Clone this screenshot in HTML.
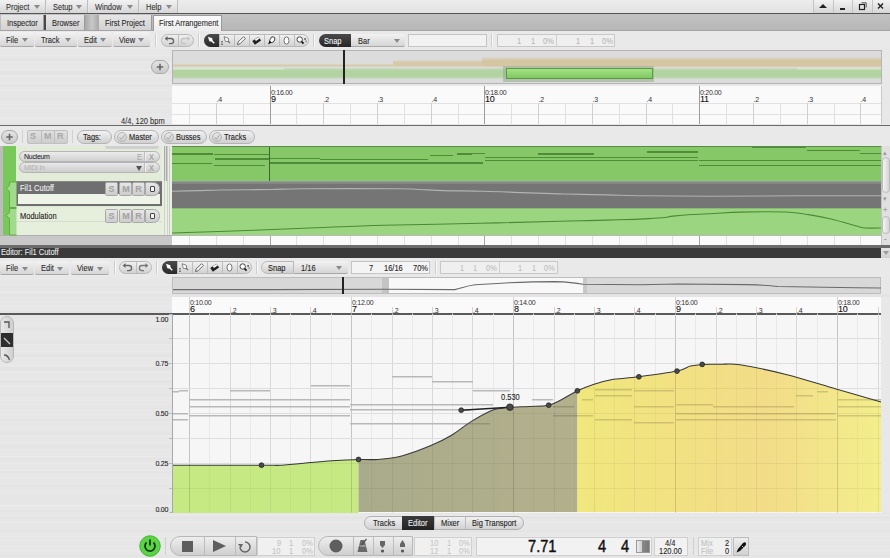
<!DOCTYPE html>
<html><head><meta charset="utf-8"><style>
html,body{margin:0;padding:0;}
body{width:890px;height:558px;overflow:hidden;position:relative;background:#e8e8e8;font-family:"Liberation Sans",sans-serif;}
body>div{position:absolute;}
.t{position:absolute;white-space:nowrap;line-height:1;letter-spacing:-0.04em;-webkit-text-stroke:0.1px currentColor;}
</style></head><body>
<div style="left:0px;top:0px;width:890px;height:13px;background:linear-gradient(#ececec,#e2e2e2);"></div>
<div style="left:0px;top:0px;width:46px;height:13px;background:linear-gradient(#f2f2f2,#d6d6d6);border-right:1px solid #bdbdbd;box-sizing:border-box;"></div>
<div class="t" style="left:6px;top:3px;font-size:9px;color:#333;transform:scaleX(0.83);transform-origin:0 0;letter-spacing:0;">Project</div>
<div style="left:34px;top:5px;width:0;height:0;border-left:3px solid transparent;border-right:3px solid transparent;border-top:4px solid #8a8a8a;"></div>
<div style="left:47px;top:0px;width:41px;height:13px;background:linear-gradient(#f2f2f2,#d6d6d6);border-right:1px solid #bdbdbd;box-sizing:border-box;"></div>
<div class="t" style="left:53px;top:3px;font-size:9px;color:#333;transform:scaleX(0.83);transform-origin:0 0;letter-spacing:0;">Setup</div>
<div style="left:76px;top:5px;width:0;height:0;border-left:3px solid transparent;border-right:3px solid transparent;border-top:4px solid #8a8a8a;"></div>
<div style="left:89px;top:0px;width:50px;height:13px;background:linear-gradient(#f2f2f2,#d6d6d6);border-right:1px solid #bdbdbd;box-sizing:border-box;"></div>
<div class="t" style="left:95px;top:3px;font-size:9px;color:#333;transform:scaleX(0.83);transform-origin:0 0;letter-spacing:0;">Window</div>
<div style="left:127px;top:5px;width:0;height:0;border-left:3px solid transparent;border-right:3px solid transparent;border-top:4px solid #8a8a8a;"></div>
<div style="left:140px;top:0px;width:38px;height:13px;background:linear-gradient(#f2f2f2,#d6d6d6);border-right:1px solid #bdbdbd;box-sizing:border-box;"></div>
<div class="t" style="left:146px;top:3px;font-size:9px;color:#333;transform:scaleX(0.83);transform-origin:0 0;letter-spacing:0;">Help</div>
<div style="left:166px;top:5px;width:0;height:0;border-left:3px solid transparent;border-right:3px solid transparent;border-top:4px solid #8a8a8a;"></div>
<div style="left:813px;top:0px;width:20px;height:13px;background:linear-gradient(#f2f2f2,#d6d6d6);border-left:1px solid #c4c4c4;box-sizing:border-box;"></div>
<div style="left:833px;top:0px;width:19px;height:13px;background:linear-gradient(#f2f2f2,#d6d6d6);border-left:1px solid #c4c4c4;box-sizing:border-box;"></div>
<div style="left:852px;top:0px;width:20px;height:13px;background:linear-gradient(#f2f2f2,#d6d6d6);border-left:1px solid #c4c4c4;box-sizing:border-box;"></div>
<div style="left:872px;top:0px;width:18px;height:13px;background:linear-gradient(#f2f2f2,#d6d6d6);border-left:1px solid #c4c4c4;box-sizing:border-box;"></div>
<div style="left:819px;top:4px;width:0px;height:0px;border-left:4px solid transparent;border-right:4px solid transparent;border-bottom:4px solid #222;"></div>
<div style="left:840px;top:8px;width:5px;height:2px;background:#222;"></div>
<svg style="position:absolute;left:852px;top:0" width="20" height="13"><rect x="7.5" y="4.5" width="5" height="5" fill="none" stroke="#222" stroke-width="1.2"/><path d="M9.5 2.8 H14.2 V7.5" fill="none" stroke="#444" stroke-width="0.9"/></svg>
<svg style="position:absolute;left:872px;top:0" width="18" height="13"><path d="M6 3.5 L11 8.5 M11 3.5 L6 8.5" stroke="#222" stroke-width="1.4"/></svg>
<div style="left:0px;top:13px;width:890px;height:1px;background:#555;"></div>
<div style="left:0px;top:14px;width:890px;height:17px;background:linear-gradient(#c2c2c2,#b6b6b6);"></div>
<div style="left:0px;top:30px;width:890px;height:1px;background:#a4a4a4;"></div>
<div style="left:1px;top:15px;width:43px;height:15px;background:linear-gradient(#e6e6e6,#d2d2d2);border-right:1px solid #9a9a9a;box-sizing:border-box;"></div>
<div class="t" style="left:7px;top:19px;font-size:9px;color:#2a2a2a;transform:scaleX(0.83);transform-origin:0 0;letter-spacing:0;">Inspector</div>
<div style="left:46px;top:15px;width:39px;height:15px;background:linear-gradient(#e6e6e6,#d2d2d2);border-right:1px solid #9a9a9a;box-sizing:border-box;"></div>
<div class="t" style="left:52px;top:19px;font-size:9px;color:#2a2a2a;transform:scaleX(0.83);transform-origin:0 0;letter-spacing:0;">Browser</div>
<div style="left:99px;top:15px;width:53px;height:15px;background:linear-gradient(#e6e6e6,#d2d2d2);border-right:1px solid #9a9a9a;box-sizing:border-box;"></div>
<div class="t" style="left:105px;top:19px;font-size:9px;color:#2a2a2a;transform:scaleX(0.83);transform-origin:0 0;letter-spacing:0;">First Project</div>
<div style="left:153px;top:15px;width:69px;height:16px;background:linear-gradient(#fafafa,#ededed);border:1px solid #9a9a9a;border-bottom:none;box-sizing:border-box;"></div>
<div class="t" style="left:159px;top:19px;font-size:9px;color:#2a2a2a;transform:scaleX(0.83);transform-origin:0 0;letter-spacing:0;">First Arrangement</div>
<div style="left:44px;top:15px;width:2px;height:15px;background:#4a4a4a;"></div>
<div style="left:85px;top:15px;width:14px;height:15px;background:linear-gradient(90deg,#a8a8a8,#c8c8c8,#a8a8a8);"></div>
<div style="left:0px;top:31px;width:890px;height:17px;background:#e9e9e9;"></div>
<div style="left:0px;top:32px;width:34px;height:15px;background:linear-gradient(#f2f2f2,#d6d6d6);border-radius:2px;border-bottom:1px solid #a8a8a8;box-sizing:border-box;"></div>
<div class="t" style="left:6px;top:36px;font-size:9px;color:#2a2a2a;transform:scaleX(0.83);transform-origin:0 0;letter-spacing:0;">File</div>
<div style="left:22px;top:38px;width:0;height:0;border-left:3px solid transparent;border-right:3px solid transparent;border-top:4px solid #8a8a8a;"></div>
<div style="left:35px;top:32px;width:42px;height:15px;background:linear-gradient(#f2f2f2,#d6d6d6);border-radius:2px;border-bottom:1px solid #a8a8a8;box-sizing:border-box;"></div>
<div class="t" style="left:41px;top:36px;font-size:9px;color:#2a2a2a;transform:scaleX(0.83);transform-origin:0 0;letter-spacing:0;">Track</div>
<div style="left:65px;top:38px;width:0;height:0;border-left:3px solid transparent;border-right:3px solid transparent;border-top:4px solid #8a8a8a;"></div>
<div style="left:78px;top:32px;width:34px;height:15px;background:linear-gradient(#f2f2f2,#d6d6d6);border-radius:2px;border-bottom:1px solid #a8a8a8;box-sizing:border-box;"></div>
<div class="t" style="left:84px;top:36px;font-size:9px;color:#2a2a2a;transform:scaleX(0.83);transform-origin:0 0;letter-spacing:0;">Edit</div>
<div style="left:100px;top:38px;width:0;height:0;border-left:3px solid transparent;border-right:3px solid transparent;border-top:4px solid #8a8a8a;"></div>
<div style="left:113px;top:32px;width:37px;height:15px;background:linear-gradient(#f2f2f2,#d6d6d6);border-radius:2px;border-bottom:1px solid #a8a8a8;box-sizing:border-box;"></div>
<div class="t" style="left:119px;top:36px;font-size:9px;color:#2a2a2a;transform:scaleX(0.83);transform-origin:0 0;letter-spacing:0;">View</div>
<div style="left:138px;top:38px;width:0;height:0;border-left:3px solid transparent;border-right:3px solid transparent;border-top:4px solid #8a8a8a;"></div>
<div style="left:161px;top:34px;width:33px;height:13px;background:linear-gradient(#f0f0f0,#d2d2d2);border-radius:7px;border:1px solid #b8b8b8;box-sizing:border-box;"></div>
<div style="left:178px;top:35px;width:1px;height:11px;background:#bdbdbd;"></div>
<svg style="position:absolute;left:161px;top:34px" width="33" height="13"><path d="M6 4.5 L10 4.5 A2.6 2.6 0 0 1 10 9.7 L8 9.7" stroke="#666" stroke-width="1.3" fill="none"/><path d="M3.5 4.5 L6.5 2 L6.5 7 Z" fill="#666"/><path d="M27 4.5 L23 4.5 A2.6 2.6 0 0 0 23 9.7 L25 9.7" stroke="#c4c4c4" stroke-width="1.3" fill="none"/><path d="M29.5 4.5 L26.5 2 L26.5 7 Z" fill="#c4c4c4"/></svg>
<div style="left:204px;top:34px;width:105px;height:13px;background:linear-gradient(#f0f0f0,#d2d2d2);border-radius:7px;border:1px solid #b8b8b8;box-sizing:border-box;"></div>
<div style="left:219px;top:35px;width:1px;height:11px;background:#bdbdbd;"></div>
<div style="left:234px;top:35px;width:1px;height:11px;background:#bdbdbd;"></div>
<div style="left:249px;top:35px;width:1px;height:11px;background:#bdbdbd;"></div>
<div style="left:264px;top:35px;width:1px;height:11px;background:#bdbdbd;"></div>
<div style="left:279px;top:35px;width:1px;height:11px;background:#bdbdbd;"></div>
<div style="left:294px;top:35px;width:1px;height:11px;background:#bdbdbd;"></div>
<div style="left:204px;top:34px;width:15px;height:13px;background:linear-gradient(#4a4a4a,#2a2a2a);border-radius:7px 0 0 7px;"></div>
<svg style="position:absolute;left:204px;top:34px" width="107" height="14"><path d="M4.0 2.7 L8.3 4.3 L8.7 7.7 L5.3 7.3 Z" fill="#fff"/><path d="M7.7 6.7 L10.3 9.3" stroke="#fff" stroke-width="1.3"/><path d="M20.0 2.7 L24.3 4.3 L24.7 7.7 L21.3 7.3 Z" fill="#fff" stroke="#666" stroke-width="0.8"/><path d="M24.0 7.2 L26.0 9.2" stroke="#666" stroke-width="1.1"/><path d="M18.0 7.0 v1.5 M18.0 9.5 v1.5" stroke="#333" stroke-width="1.1"/><path d="M33.5 10.5 L34.2 8.0 L39.5 2.7 L41.3 4.5 L36.0 9.8 Z" fill="#fff" stroke="#555" stroke-width="0.9"/><g transform="rotate(-35 52.5 6.5)"><rect x="48.7" y="4.5" width="7.6" height="4.6" fill="#222"/><rect x="51.7" y="4.7" width="4.4" height="2" fill="#fff"/></g><ellipse cx="68.3" cy="5.7" rx="2.2" ry="3.1" transform="rotate(30 68.3 5.7)" fill="#fff" stroke="#444" stroke-width="0.9"/><path d="M64.2 10.5 L65.3 6.7 L67.7 8.5 Z" fill="#111"/><ellipse cx="82.5" cy="6.5" rx="2.5" ry="3.6" fill="#fff" stroke="#666" stroke-width="0.9"/><circle cx="95.7" cy="5.5" r="2.7" fill="#fff" stroke="#444" stroke-width="1"/><path d="M97.5 7.5 L99.5 9.7" stroke="#111" stroke-width="1.8"/><circle cx="101.1" cy="4.9" r="0.9" fill="#444"/><circle cx="102.1" cy="7.1" r="0.7" fill="#444"/></svg>
<div style="left:319px;top:34px;width:32px;height:13px;background:linear-gradient(#4a4a4a,#262626);border-radius:7px 0 0 7px;"></div>
<div class="t" style="left:324px;top:37px;font-size:9px;color:#f4f4f4;transform:scaleX(0.83);transform-origin:0 0;letter-spacing:0;">Snap</div>
<div style="left:351px;top:34px;width:54px;height:13px;background:linear-gradient(#f2f2f2,#d6d6d6);border-radius:0 2px 2px 0;border-bottom:1px solid #a8a8a8;box-sizing:border-box;"></div>
<div class="t" style="left:358px;top:37px;font-size:9px;color:#2a2a2a;transform:scaleX(0.83);transform-origin:0 0;letter-spacing:0;">Bar</div>
<div style="left:394px;top:39px;width:0;height:0;border-left:3px solid transparent;border-right:3px solid transparent;border-top:4px solid #8a8a8a;"></div>
<div style="left:408px;top:34px;width:79px;height:13px;background:#f2f2f2;border:1px solid #c4c4c4;box-sizing:border-box;"></div>
<div style="left:497px;top:34px;width:118px;height:13px;background:#efefef;border:1px solid #c8c8c8;box-sizing:border-box;"></div>
<div style="left:556px;top:35px;width:1px;height:11px;background:#cfcfcf;"></div>
<div class="t" style="left:516.5px;top:37px;font-size:9px;color:#b8b8b8;transform:scaleX(0.83);transform-origin:0 0;letter-spacing:0;">1</div>
<div class="t" style="left:530.5px;top:37px;font-size:9px;color:#b8b8b8;transform:scaleX(0.83);transform-origin:0 0;letter-spacing:0;">1</div>
<div class="t" style="left:543px;top:37px;font-size:9px;color:#b8b8b8;transform:scaleX(0.83);transform-origin:0 0;letter-spacing:0;">0%</div>
<div class="t" style="left:576px;top:37px;font-size:9px;color:#b8b8b8;transform:scaleX(0.83);transform-origin:0 0;letter-spacing:0;">1</div>
<div class="t" style="left:590px;top:37px;font-size:9px;color:#b8b8b8;transform:scaleX(0.83);transform-origin:0 0;letter-spacing:0;">1</div>
<div class="t" style="left:602px;top:37px;font-size:9px;color:#b8b8b8;transform:scaleX(0.83);transform-origin:0 0;letter-spacing:0;">0%</div>
<div style="left:155px;top:34px;width:1px;height:13px;background:#cdcdcd;border-right:1px solid #f8f8f8;"></div>
<div style="left:198px;top:34px;width:1px;height:13px;background:#cdcdcd;border-right:1px solid #f8f8f8;"></div>
<div style="left:313px;top:34px;width:1px;height:13px;background:#cdcdcd;border-right:1px solid #f8f8f8;"></div>
<div style="left:491px;top:34px;width:1px;height:13px;background:#cdcdcd;border-right:1px solid #f8f8f8;"></div>
<div style="left:0px;top:48px;width:172px;height:78px;background:repeating-linear-gradient(0deg,rgba(255,255,255,0.12) 0 1px,transparent 1px 7px),repeating-linear-gradient(0deg,rgba(0,0,0,0.01) 0 3px,transparent 3px 13px),#e7e7e7;"></div>
<div style="left:151px;top:60px;width:18px;height:14px;background:linear-gradient(#e4e4e4,#c9c9c9);border-radius:7px;border:1px solid #a8a8a8;box-sizing:border-box;"></div>
<svg style="position:absolute;left:151px;top:60px" width="18" height="14"><path d="M9 3.8 V10.2 M5.8 7 H12.2" stroke="#666" stroke-width="1.6"/></svg>
<div style="left:172px;top:50px;width:710px;height:34px;background:#dcdcdc;border:1px solid #b4b4b4;box-sizing:border-box;"></div>
<div style="left:173px;top:63.5px;width:708px;height:3px;background:linear-gradient(rgba(214,200,160,0.2),rgba(214,200,160,0.9),rgba(214,200,160,0.2));"></div>
<div style="left:393px;top:60px;width:90px;height:6px;background:linear-gradient(rgba(214,198,160,0.1),rgba(214,198,160,0.85) 40%,rgba(214,198,160,0.85) 70%,rgba(214,198,160,0.2));"></div>
<div style="left:482px;top:57px;width:399px;height:9.5px;background:linear-gradient(rgba(212,196,156,0.15),rgba(212,196,156,0.9) 35%,rgba(212,196,156,0.9) 70%,rgba(212,196,156,0.3));"></div>
<div style="left:173px;top:67.5px;width:111px;height:2px;background:#f2f2ec;"></div>
<div style="left:797px;top:67.5px;width:84px;height:2px;background:#f0f0ea;"></div>
<div style="left:173px;top:68px;width:708px;height:11px;background:linear-gradient(rgba(170,210,150,0.25),rgba(170,210,150,0.85) 25%,rgba(170,210,150,0.85) 75%,rgba(170,210,150,0.25));"></div>
<div style="left:503px;top:66px;width:151px;height:16px;background:rgba(150,170,140,0.55);"></div>
<div style="left:506px;top:68px;width:147px;height:10.5px;background:linear-gradient(#a4e286,#80c862);border:1px solid #5a9a40;box-sizing:border-box;"></div>
<div style="left:343px;top:50px;width:2px;height:34px;background:#222;"></div>
<div style="left:172px;top:86px;width:709px;height:38px;background:#fafafa;"></div>
<div style="left:172px;top:103px;width:709px;height:1px;background:#e2e2e2;"></div>
<div style="left:172px;top:114px;width:709px;height:1px;background:#e2e2e2;"></div>
<div style="left:881px;top:86px;width:1px;height:38px;background:#c8c8c8;"></div>
<div style="left:189px;top:103px;width:1px;height:21px;background:#e0e0e0;"></div>
<div style="left:216px;top:103px;width:1px;height:21px;background:#d0d0d0;"></div>
<div style="left:243px;top:103px;width:1px;height:21px;background:#e0e0e0;"></div>
<div style="left:270px;top:86px;width:1px;height:38px;background:#9c9c9c;"></div>
<div style="left:296px;top:103px;width:1px;height:21px;background:#e0e0e0;"></div>
<div style="left:323px;top:103px;width:1px;height:21px;background:#d0d0d0;"></div>
<div style="left:350px;top:103px;width:1px;height:21px;background:#e0e0e0;"></div>
<div style="left:377px;top:103px;width:1px;height:21px;background:#d0d0d0;"></div>
<div style="left:404px;top:103px;width:1px;height:21px;background:#e0e0e0;"></div>
<div style="left:431px;top:103px;width:1px;height:21px;background:#d0d0d0;"></div>
<div style="left:458px;top:103px;width:1px;height:21px;background:#e0e0e0;"></div>
<div style="left:484px;top:86px;width:1px;height:38px;background:#9c9c9c;"></div>
<div style="left:511px;top:103px;width:1px;height:21px;background:#e0e0e0;"></div>
<div style="left:538px;top:103px;width:1px;height:21px;background:#d0d0d0;"></div>
<div style="left:565px;top:103px;width:1px;height:21px;background:#e0e0e0;"></div>
<div style="left:592px;top:103px;width:1px;height:21px;background:#d0d0d0;"></div>
<div style="left:619px;top:103px;width:1px;height:21px;background:#e0e0e0;"></div>
<div style="left:646px;top:103px;width:1px;height:21px;background:#d0d0d0;"></div>
<div style="left:672px;top:103px;width:1px;height:21px;background:#e0e0e0;"></div>
<div style="left:699px;top:86px;width:1px;height:38px;background:#9c9c9c;"></div>
<div style="left:726px;top:103px;width:1px;height:21px;background:#e0e0e0;"></div>
<div style="left:753px;top:103px;width:1px;height:21px;background:#d0d0d0;"></div>
<div style="left:780px;top:103px;width:1px;height:21px;background:#e0e0e0;"></div>
<div style="left:807px;top:103px;width:1px;height:21px;background:#d0d0d0;"></div>
<div style="left:834px;top:103px;width:1px;height:21px;background:#e0e0e0;"></div>
<div style="left:860px;top:103px;width:1px;height:21px;background:#d0d0d0;"></div>
<div class="t" style="left:271px;top:89px;font-size:7px;color:#333;-webkit-text-stroke:0;">0:16.00</div>
<div class="t" style="left:271px;top:95px;font-size:9px;color:#111;">9</div>
<div class="t" style="left:485px;top:89px;font-size:7px;color:#333;-webkit-text-stroke:0;">0:18.00</div>
<div class="t" style="left:485px;top:95px;font-size:9px;color:#111;">10</div>
<div class="t" style="left:700px;top:89px;font-size:7px;color:#333;-webkit-text-stroke:0;">0:20.00</div>
<div class="t" style="left:700px;top:95px;font-size:9px;color:#111;">11</div>
<div class="t" style="left:216.5px;top:96px;font-size:7px;color:#333;-webkit-text-stroke:0;">.4</div>
<div class="t" style="left:323.5px;top:96px;font-size:7px;color:#333;-webkit-text-stroke:0;">.2</div>
<div class="t" style="left:377.5px;top:96px;font-size:7px;color:#333;-webkit-text-stroke:0;">.3</div>
<div class="t" style="left:431.5px;top:96px;font-size:7px;color:#333;-webkit-text-stroke:0;">.4</div>
<div class="t" style="left:538.5px;top:96px;font-size:7px;color:#333;-webkit-text-stroke:0;">.2</div>
<div class="t" style="left:592.5px;top:96px;font-size:7px;color:#333;-webkit-text-stroke:0;">.3</div>
<div class="t" style="left:646.5px;top:96px;font-size:7px;color:#333;-webkit-text-stroke:0;">.4</div>
<div class="t" style="left:753.5px;top:96px;font-size:7px;color:#333;-webkit-text-stroke:0;">.2</div>
<div class="t" style="left:807.5px;top:96px;font-size:7px;color:#333;-webkit-text-stroke:0;">.3</div>
<div class="t" style="left:860.5px;top:96px;font-size:7px;color:#333;-webkit-text-stroke:0;">.4</div>
<div class="t" style="left:120.5px;top:117px;font-size:9px;color:#333;transform:scaleX(0.83);transform-origin:0 0;letter-spacing:0;">4/4, 120 bpm</div>
<div style="left:0px;top:125px;width:890px;height:2px;background:#6a6a6a;"></div>
<div style="left:0px;top:126px;width:890px;height:20px;background:#e9e9e9;"></div>
<div style="left:1px;top:130px;width:17px;height:14px;background:linear-gradient(#e4e4e4,#c9c9c9);border-radius:7px;border:1px solid #a8a8a8;box-sizing:border-box;"></div>
<svg style="position:absolute;left:1px;top:130px" width="17" height="14"><path d="M8.5 3.8 V10.2 M5.3 7 H11.7" stroke="#666" stroke-width="1.6"/></svg>
<div style="left:22px;top:130px;width:1px;height:13px;background:#d0d0d0;"></div>
<div style="left:27px;top:130px;width:41px;height:14px;background:linear-gradient(#e0e0e0,#cdcdcd);border-radius:2px;border:1px solid #c0c0c0;box-sizing:border-box;"></div>
<div class="t" style="left:30px;top:132px;font-size:9px;color:#aaaaaa;font-weight:bold;">S</div>
<div style="left:41px;top:131px;width:1px;height:12px;background:#bdbdbd;"></div>
<div class="t" style="left:44px;top:132px;font-size:9px;color:#aaaaaa;font-weight:bold;">M</div>
<div style="left:54px;top:131px;width:1px;height:12px;background:#bdbdbd;"></div>
<div class="t" style="left:57px;top:132px;font-size:9px;color:#aaaaaa;font-weight:bold;">R</div>
<div style="left:72px;top:130px;width:1px;height:13px;background:#d0d0d0;"></div>
<div style="left:77px;top:130px;width:35px;height:14px;background:linear-gradient(#f2f2f2,#d0d0d0);border-radius:7px;border:1px solid #b4b4b4;box-sizing:border-box;"></div>
<div class="t" style="left:83px;top:133px;font-size:9px;color:#222;transform:scaleX(0.83);transform-origin:0 0;letter-spacing:0;">Tags:</div>
<div style="left:114px;top:130px;width:45px;height:14px;background:linear-gradient(#f2f2f2,#d0d0d0);border-radius:7px;border:1px solid #b4b4b4;box-sizing:border-box;"></div>
<div style="left:117px;top:132px;width:10px;height:10px;border-radius:5px;background:linear-gradient(#e6e6e6,#cfcfcf);border:1px solid #b4b4b4;box-sizing:border-box;"></div>
<svg style="position:absolute;left:117px;top:132px" width="10" height="10"><path d="M2.5 5.5 L4.3 7.3 L7.8 2.8" stroke="#a8a8a8" stroke-width="1" fill="none"/></svg>
<div class="t" style="left:129px;top:133px;font-size:9px;color:#222;transform:scaleX(0.83);transform-origin:0 0;letter-spacing:0;">Master</div>
<div style="left:161px;top:130px;width:46px;height:14px;background:linear-gradient(#f2f2f2,#d0d0d0);border-radius:7px;border:1px solid #b4b4b4;box-sizing:border-box;"></div>
<div style="left:164px;top:132px;width:10px;height:10px;border-radius:5px;background:linear-gradient(#e6e6e6,#cfcfcf);border:1px solid #b4b4b4;box-sizing:border-box;"></div>
<svg style="position:absolute;left:164px;top:132px" width="10" height="10"><path d="M2.5 5.5 L4.3 7.3 L7.8 2.8" stroke="#a8a8a8" stroke-width="1" fill="none"/></svg>
<div class="t" style="left:176px;top:133px;font-size:9px;color:#222;transform:scaleX(0.83);transform-origin:0 0;letter-spacing:0;">Busses</div>
<div style="left:209px;top:130px;width:46px;height:14px;background:linear-gradient(#f2f2f2,#d0d0d0);border-radius:7px;border:1px solid #b4b4b4;box-sizing:border-box;"></div>
<div style="left:212px;top:132px;width:10px;height:10px;border-radius:5px;background:linear-gradient(#e6e6e6,#cfcfcf);border:1px solid #b4b4b4;box-sizing:border-box;"></div>
<svg style="position:absolute;left:212px;top:132px" width="10" height="10"><path d="M2.5 5.5 L4.3 7.3 L7.8 2.8" stroke="#a8a8a8" stroke-width="1" fill="none"/></svg>
<div class="t" style="left:224px;top:133px;font-size:9px;color:#222;transform:scaleX(0.83);transform-origin:0 0;letter-spacing:0;">Tracks</div>
<div style="left:0px;top:146px;width:172px;height:89px;background:#dfe8d6;"></div>
<div style="left:0px;top:146px;width:3px;height:89px;background:#bcbcbc;"></div>
<div style="left:3px;top:146px;width:13px;height:89px;background:#78c95a;"></div>
<div style="left:16px;top:146px;width:146px;height:35px;background:#e2ecd8;"></div>
<div style="left:105px;top:146px;width:54px;height:3px;background:#d0d0d0;border-radius:0 0 6px 6px;"></div>
<div style="left:19px;top:151px;width:141px;height:11px;background:linear-gradient(#ececec,#d0d0d0);border-radius:5.5px;border:1px solid #b4b4b4;box-sizing:border-box;"></div>
<div class="t" style="left:24px;top:152.5px;font-size:7px;color:#111;-webkit-text-stroke:0;">Nucleum</div>
<div style="left:144px;top:152px;width:1px;height:9px;background:#c0c0c0;border-right:1px solid #f0f0f0;"></div>
<div class="t" style="left:137px;top:152.5px;font-size:9px;color:#a8a8a8;transform:scaleX(0.83);transform-origin:0 0;letter-spacing:0;">E</div>
<div class="t" style="left:148.5px;top:152.5px;font-size:9px;color:#9a9a9a;transform:scaleX(0.83);transform-origin:0 0;letter-spacing:0;">X</div>
<div style="left:19px;top:162px;width:141px;height:11px;background:linear-gradient(#e8e8e8,#cdcdcd);border-radius:5.5px;border:1px solid #b4b4b4;box-sizing:border-box;"></div>
<div class="t" style="left:24px;top:163.5px;font-size:7px;color:#b0b0b0;-webkit-text-stroke:0;">MIDI In</div>
<div style="left:144px;top:163px;width:1px;height:9px;background:#c0c0c0;border-right:1px solid #f0f0f0;"></div>
<div style="left:136px;top:166px;width:0px;height:0px;border-left:3px solid transparent;border-right:3px solid transparent;border-top:5px solid #555;"></div>
<div class="t" style="left:148.5px;top:163.5px;font-size:9px;color:#9a9a9a;transform:scaleX(0.83);transform-origin:0 0;letter-spacing:0;">X</div>
<div style="left:16px;top:181px;width:146px;height:1px;background:#888;"></div>
<div style="left:16px;top:182px;width:146px;height:12px;background:#6f6f6f;"></div>
<div class="t" style="left:20px;top:184.3px;font-size:9px;color:#f0f0f0;transform:scaleX(0.83);transform-origin:0 0;letter-spacing:0;">Fil1 Cutoff</div>
<div style="left:16px;top:194px;width:146px;height:12px;background:#eef4e8;border:2px solid #6f6f6f;border-top:none;box-sizing:border-box;"></div>
<div style="left:16px;top:207px;width:146px;height:28px;background:#e6eedc;"></div>
<div style="left:16px;top:221px;width:146px;height:1px;background:#d6dccf;"></div>
<div class="t" style="left:20px;top:212px;font-size:9px;color:#1a1a1a;transform:scaleX(0.83);transform-origin:0 0;letter-spacing:0;">Modulation</div>
<div style="left:105.3px;top:182px;width:13.200000000000003px;height:13.5px;background:linear-gradient(#e6e6e6,#cdcdcd);border:1px solid #a8a8a8;box-sizing:border-box;border-radius:1.5px;"></div>
<div style="left:119px;top:182px;width:12.5px;height:13.5px;background:linear-gradient(#e6e6e6,#cdcdcd);border:1px solid #a8a8a8;box-sizing:border-box;border-radius:1.5px;"></div>
<div style="left:132px;top:182px;width:12.5px;height:13.5px;background:linear-gradient(#e6e6e6,#cdcdcd);border:1px solid #a8a8a8;box-sizing:border-box;border-radius:1.5px;"></div>
<div style="left:145px;top:182px;width:15px;height:13.5px;background:linear-gradient(#e6e6e6,#cdcdcd);border:1px solid #a8a8a8;box-sizing:border-box;border-radius:1px 6.5px 6.5px 1px;"></div>
<div class="t" style="left:108.6px;top:185px;font-size:9px;color:#a4a4a4;font-weight:bold;">S</div>
<div class="t" style="left:122.3px;top:185px;font-size:9px;color:#a4a4a4;font-weight:bold;">M</div>
<div class="t" style="left:135.3px;top:185px;font-size:9px;color:#a4a4a4;font-weight:bold;">R</div>
<div style="left:150px;top:186px;width:5px;height:6px;border:1.2px solid #444;background:#f4f4f4;box-sizing:border-box;border-radius:1px;"></div>
<div style="left:105.3px;top:209px;width:13.200000000000003px;height:13.5px;background:linear-gradient(#e6e6e6,#cdcdcd);border:1px solid #a8a8a8;box-sizing:border-box;border-radius:1.5px;"></div>
<div style="left:119px;top:209px;width:12.5px;height:13.5px;background:linear-gradient(#e6e6e6,#cdcdcd);border:1px solid #a8a8a8;box-sizing:border-box;border-radius:1.5px;"></div>
<div style="left:132px;top:209px;width:12.5px;height:13.5px;background:linear-gradient(#e6e6e6,#cdcdcd);border:1px solid #a8a8a8;box-sizing:border-box;border-radius:1.5px;"></div>
<div style="left:145px;top:209px;width:15px;height:13.5px;background:linear-gradient(#e6e6e6,#cdcdcd);border:1px solid #a8a8a8;box-sizing:border-box;border-radius:1px 6.5px 6.5px 1px;"></div>
<div class="t" style="left:108.6px;top:212px;font-size:9px;color:#a4a4a4;font-weight:bold;">S</div>
<div class="t" style="left:122.3px;top:212px;font-size:9px;color:#a4a4a4;font-weight:bold;">M</div>
<div class="t" style="left:135.3px;top:212px;font-size:9px;color:#a4a4a4;font-weight:bold;">R</div>
<div style="left:150px;top:213px;width:5px;height:6px;border:1.2px solid #444;background:#f4f4f4;box-sizing:border-box;border-radius:1px;"></div>
<div style="left:162px;top:146px;width:10px;height:89px;background:#e8eee2;"></div>
<div style="left:164px;top:146px;width:4px;height:35px;background:linear-gradient(90deg,#aaa 0,#aaa 1px,#ddd 1px,#ddd 2px,#aaa 2px,#aaa 3px,#ccc 3px);"></div>
<div style="left:164px;top:181px;width:1px;height:54px;background:#cfd6c8;"></div>
<div style="left:167px;top:181px;width:1px;height:54px;background:#cfd6c8;"></div>
<div style="left:169px;top:146px;width:1px;height:89px;background:#c8d0c0;"></div>
<div style="left:0px;top:235px;width:172px;height:10px;background:#c8c8c8;border-top:1px solid #b0b0b0;box-sizing:border-box;"></div>
<svg style="position:absolute;left:0;top:0" width="20" height="240"><path d="M16.5 182 L9.5 182 L9.5 185.5 L6.3 188.5 L9.5 191.5 L9.5 207.5 L16.5 207.5" fill="#a2da8c" stroke="#5ea846" stroke-width="0.9"/><path d="M16.5 208.5 L9.5 208.5 L9.5 212.5 L6.3 215.5 L9.5 218.5 L9.5 235 L16.5 235" fill="#a2da8c" stroke="#5ea846" stroke-width="0.9"/></svg>
<div style="left:172px;top:146px;width:709px;height:35px;background:#86c867;"></div>
<div style="left:269px;top:146px;width:1px;height:35px;background:#3a6a2a;"></div>
<div style="left:172px;top:152.5px;width:41px;height:2px;background:#4e8c38;"></div>
<div style="left:214px;top:153.5px;width:55px;height:1.5px;background:#4e8c38;"></div>
<div style="left:215px;top:158px;width:54px;height:1.5px;background:#4e8c38;"></div>
<div style="left:172px;top:162.8px;width:40px;height:1.5px;background:#4e8c38;"></div>
<div style="left:214px;top:164.5px;width:51px;height:1.5px;background:#4e8c38;"></div>
<div style="left:270px;top:157.6px;width:50px;height:1.5px;background:#4e8c38;"></div>
<div style="left:320px;top:158.6px;width:108px;height:1.5px;background:#4e8c38;"></div>
<div style="left:270px;top:162px;width:213px;height:2px;background:#4e8c38;"></div>
<div style="left:430px;top:154.6px;width:23px;height:1.5px;background:#4e8c38;"></div>
<div style="left:457px;top:153.3px;width:15px;height:1.5px;background:#4e8c38;"></div>
<div style="left:472px;top:152.5px;width:13px;height:1.5px;background:#4e8c38;"></div>
<div style="left:485px;top:156.6px;width:213px;height:1.5px;background:#4e8c38;"></div>
<div style="left:485px;top:159.8px;width:213px;height:1.5px;background:#4e8c38;"></div>
<div style="left:538px;top:153px;width:56px;height:1.5px;background:#4e8c38;"></div>
<div style="left:647px;top:151.2px;width:51px;height:1.5px;background:#4e8c38;"></div>
<div style="left:699px;top:159.6px;width:182px;height:1.5px;background:#4e8c38;"></div>
<div style="left:699px;top:164.6px;width:182px;height:1.5px;background:#4e8c38;"></div>
<div style="left:752px;top:147px;width:54px;height:1.2px;background:#4e8c38;"></div>
<div style="left:807px;top:149.5px;width:53px;height:1.5px;background:#4e8c38;"></div>
<div style="left:860px;top:152.8px;width:21px;height:1.5px;background:#4e8c38;"></div>
<div style="left:172px;top:146px;width:709px;height:1px;background:#5a8a48;"></div>
<div style="left:172px;top:181px;width:709px;height:1px;background:#9a9a9a;"></div>
<div style="left:172px;top:182px;width:709px;height:26px;background:#757575;"></div>
<div style="left:172px;top:182px;width:709px;height:2px;background:#868686;"></div>
<div style="left:172px;top:208px;width:709px;height:1px;background:#8ab878;"></div>
<div style="left:172px;top:209px;width:709px;height:26px;background:#9cd580;"></div>
<svg style="position:absolute;left:0;top:0" width="890" height="558"><path d="M172,191.2 C176.3,191.1 189.8,190.8 198.0,190.6 C206.2,190.4 208.8,190.2 221.0,190.0 C233.2,189.8 257.5,189.7 271.0,189.5 C284.5,189.3 280.5,188.8 302.0,188.7 C323.5,188.6 380.3,188.6 400.0,188.7 C419.7,188.8 412.7,189.2 420.0,189.5 C427.3,189.8 433.5,190.3 444.0,190.6 C454.5,190.9 470.0,190.9 483.0,191.2 C496.0,191.5 508.5,192.1 522.0,192.6 C535.5,193.1 549.8,193.6 564.0,194.0 C578.2,194.4 593.3,194.6 607.0,194.9 C620.7,195.2 629.0,195.6 646.0,195.8 C663.0,196.0 683.8,196.2 709.0,196.2 C734.2,196.2 768.3,195.9 797.0,195.8 C825.7,195.7 867.0,195.8 881.0,195.8" stroke="#b2b2b2" stroke-width="1.1" fill="none"/><path d="M172,233 C185.7,232.6 230.0,231.2 254.0,230.3 C278.0,229.4 294.3,228.5 316.0,227.7 C337.7,226.9 356.7,226.0 384.0,225.3 C411.3,224.6 450.7,224.0 480.0,223.3 C509.3,222.6 542.0,221.6 560.0,221.2 C578.0,220.8 578.2,220.8 588.0,220.6 C597.8,220.4 608.8,220.1 619.0,219.8 C629.2,219.5 641.3,219.0 649.0,218.6 C656.7,218.2 661.0,217.9 665.0,217.5 C669.0,217.1 668.6,216.6 673.0,216.1 C677.4,215.6 684.7,214.9 691.5,214.5 C698.3,214.1 705.9,213.9 714.0,213.5 C722.1,213.1 728.0,212.3 740.0,212.1 C752.0,211.8 774.6,211.6 786.0,212.0 C797.4,212.4 801.0,213.4 808.5,214.6 C816.0,215.8 822.6,217.0 831.0,219.0 C839.4,221.0 853.2,225.2 859.0,226.7 C864.8,228.2 862.3,227.8 866.0,228.0 C869.7,228.2 878.5,228.0 881.0,228.0" stroke="#4a8a34" stroke-width="1.1" fill="none"/></svg>
<div style="left:172px;top:235px;width:709px;height:10px;background:#fafafa;border-top:1px solid #b8b8b8;box-sizing:border-box;"></div>
<div style="left:189px;top:236px;width:1px;height:9px;background:#e0e0e0;"></div>
<div style="left:216px;top:236px;width:1px;height:9px;background:#e0e0e0;"></div>
<div style="left:243px;top:236px;width:1px;height:9px;background:#e0e0e0;"></div>
<div style="left:270px;top:236px;width:1px;height:9px;background:#a8a8a8;"></div>
<div style="left:296px;top:236px;width:1px;height:9px;background:#e0e0e0;"></div>
<div style="left:323px;top:236px;width:1px;height:9px;background:#e0e0e0;"></div>
<div style="left:350px;top:236px;width:1px;height:9px;background:#e0e0e0;"></div>
<div style="left:377px;top:236px;width:1px;height:9px;background:#e0e0e0;"></div>
<div style="left:404px;top:236px;width:1px;height:9px;background:#e0e0e0;"></div>
<div style="left:431px;top:236px;width:1px;height:9px;background:#e0e0e0;"></div>
<div style="left:458px;top:236px;width:1px;height:9px;background:#e0e0e0;"></div>
<div style="left:484px;top:236px;width:1px;height:9px;background:#a8a8a8;"></div>
<div style="left:511px;top:236px;width:1px;height:9px;background:#e0e0e0;"></div>
<div style="left:538px;top:236px;width:1px;height:9px;background:#e0e0e0;"></div>
<div style="left:565px;top:236px;width:1px;height:9px;background:#e0e0e0;"></div>
<div style="left:592px;top:236px;width:1px;height:9px;background:#e0e0e0;"></div>
<div style="left:619px;top:236px;width:1px;height:9px;background:#e0e0e0;"></div>
<div style="left:646px;top:236px;width:1px;height:9px;background:#e0e0e0;"></div>
<div style="left:672px;top:236px;width:1px;height:9px;background:#e0e0e0;"></div>
<div style="left:699px;top:236px;width:1px;height:9px;background:#a8a8a8;"></div>
<div style="left:726px;top:236px;width:1px;height:9px;background:#e0e0e0;"></div>
<div style="left:753px;top:236px;width:1px;height:9px;background:#e0e0e0;"></div>
<div style="left:780px;top:236px;width:1px;height:9px;background:#e0e0e0;"></div>
<div style="left:807px;top:236px;width:1px;height:9px;background:#e0e0e0;"></div>
<div style="left:834px;top:236px;width:1px;height:9px;background:#e0e0e0;"></div>
<div style="left:860px;top:236px;width:1px;height:9px;background:#e0e0e0;"></div>
<div style="left:881px;top:146px;width:9px;height:99px;background:#e0e0e0;border-left:1px solid #c0c0c0;box-sizing:border-box;"></div>
<div style="left:882px;top:157px;width:8px;height:36px;background:linear-gradient(90deg,#f4f4f4,#d4d4d4);border-radius:4px;border:1px solid #bbb;box-sizing:border-box;"></div>
<div style="left:882px;top:216px;width:8px;height:18px;background:linear-gradient(90deg,#f4f4f4,#d4d4d4);border-radius:4px;border:1px solid #bbb;box-sizing:border-box;"></div>
<div class="t" style="left:883px;top:149px;font-size:7px;color:#999;-webkit-text-stroke:0;">&#x25B4;</div>
<div class="t" style="left:883px;top:195px;font-size:7px;color:#999;-webkit-text-stroke:0;">&#x25BE;</div>
<div class="t" style="left:883px;top:206px;font-size:9px;color:#999;transform:scaleX(0.83);transform-origin:0 0;letter-spacing:0;">+</div>
<div class="t" style="left:884px;top:235px;font-size:9px;color:#999;transform:scaleX(0.83);transform-origin:0 0;letter-spacing:0;">-</div>
<div style="left:0px;top:245px;width:890px;height:3px;background:#6c6c6c;"></div>
<div style="left:0px;top:248px;width:881px;height:10px;background:#3a3a3a;"></div>
<div style="left:881px;top:248px;width:9px;height:10px;background:linear-gradient(#e4e4e4,#cfcfcf);"></div>
<div class="t" style="left:1px;top:248.3px;font-size:9px;color:#e6e6e6;transform:scaleX(0.83);transform-origin:0 0;letter-spacing:0;">Editor: Fil1 Cutoff</div>
<div style="left:883px;top:251px;width:0px;height:0px;border-left:3px solid transparent;border-right:3px solid transparent;border-top:4px solid #9a9a9a;"></div>
<div style="left:0px;top:258px;width:890px;height:19px;background:#e9e9e9;"></div>
<div style="left:0px;top:261px;width:34px;height:14px;background:linear-gradient(#f2f2f2,#d6d6d6);border-radius:2px;border-bottom:1px solid #a8a8a8;box-sizing:border-box;"></div>
<div class="t" style="left:6px;top:263.8px;font-size:9px;color:#2a2a2a;transform:scaleX(0.83);transform-origin:0 0;letter-spacing:0;">File</div>
<div style="left:22px;top:267px;width:0;height:0;border-left:3px solid transparent;border-right:3px solid transparent;border-top:4px solid #8a8a8a;"></div>
<div style="left:35px;top:261px;width:34px;height:14px;background:linear-gradient(#f2f2f2,#d6d6d6);border-radius:2px;border-bottom:1px solid #a8a8a8;box-sizing:border-box;"></div>
<div class="t" style="left:41px;top:263.8px;font-size:9px;color:#2a2a2a;transform:scaleX(0.83);transform-origin:0 0;letter-spacing:0;">Edit</div>
<div style="left:57px;top:267px;width:0;height:0;border-left:3px solid transparent;border-right:3px solid transparent;border-top:4px solid #8a8a8a;"></div>
<div style="left:71px;top:261px;width:38px;height:14px;background:linear-gradient(#f2f2f2,#d6d6d6);border-radius:2px;border-bottom:1px solid #a8a8a8;box-sizing:border-box;"></div>
<div class="t" style="left:77px;top:263.8px;font-size:9px;color:#2a2a2a;transform:scaleX(0.83);transform-origin:0 0;letter-spacing:0;">View</div>
<div style="left:97px;top:267px;width:0;height:0;border-left:3px solid transparent;border-right:3px solid transparent;border-top:4px solid #8a8a8a;"></div>
<div style="left:119px;top:261px;width:33px;height:13px;background:linear-gradient(#f0f0f0,#d2d2d2);border-radius:7px;border:1px solid #b8b8b8;box-sizing:border-box;"></div>
<div style="left:136px;top:262px;width:1px;height:11px;background:#bdbdbd;"></div>
<svg style="position:absolute;left:119px;top:261px" width="33" height="13"><path d="M6 4.5 L10 4.5 A2.6 2.6 0 0 1 10 9.7 L8 9.7" stroke="#666" stroke-width="1.3" fill="none"/><path d="M3.5 4.5 L6.5 2 L6.5 7 Z" fill="#666"/><path d="M27 4.5 L23 4.5 A2.6 2.6 0 0 0 23 9.7 L25 9.7" stroke="#777" stroke-width="1.3" fill="none"/><path d="M29.5 4.5 L26.5 2 L26.5 7 Z" fill="#777"/></svg>
<div style="left:161.5px;top:261px;width:90.5px;height:13px;background:linear-gradient(#f0f0f0,#d2d2d2);border-radius:7px;border:1px solid #b8b8b8;box-sizing:border-box;"></div>
<div style="left:177px;top:262px;width:1px;height:11px;background:#bdbdbd;"></div>
<div style="left:192px;top:262px;width:1px;height:11px;background:#bdbdbd;"></div>
<div style="left:207px;top:262px;width:1px;height:11px;background:#bdbdbd;"></div>
<div style="left:222px;top:262px;width:1px;height:11px;background:#bdbdbd;"></div>
<div style="left:237px;top:262px;width:1px;height:11px;background:#bdbdbd;"></div>
<div style="left:161.5px;top:261px;width:15px;height:13px;background:linear-gradient(#4a4a4a,#2a2a2a);border-radius:7px 0 0 7px;"></div>
<svg style="position:absolute;left:161.5px;top:261px" width="92" height="14"><path d="M4.0 2.7 L8.3 4.3 L8.7 7.7 L5.3 7.3 Z" fill="#fff"/><path d="M7.7 6.7 L10.3 9.3" stroke="#fff" stroke-width="1.3"/><path d="M20.0 2.7 L24.3 4.3 L24.7 7.7 L21.3 7.3 Z" fill="#fff" stroke="#666" stroke-width="0.8"/><path d="M24.0 7.2 L26.0 9.2" stroke="#666" stroke-width="1.1"/><path d="M18.0 7.0 v1.5 M18.0 9.5 v1.5" stroke="#333" stroke-width="1.1"/><path d="M33.5 10.5 L34.2 8.0 L39.5 2.7 L41.3 4.5 L36.0 9.8 Z" fill="#fff" stroke="#555" stroke-width="0.9"/><g transform="rotate(-35 52.5 6.5)"><rect x="48.7" y="4.5" width="7.6" height="4.6" fill="#222"/><rect x="51.7" y="4.7" width="4.4" height="2" fill="#fff"/></g><ellipse cx="67.5" cy="6.5" rx="2.5" ry="3.6" fill="#fff" stroke="#666" stroke-width="0.9"/><circle cx="80.7" cy="5.5" r="2.7" fill="#fff" stroke="#444" stroke-width="1"/><path d="M82.5 7.5 L84.5 9.7" stroke="#111" stroke-width="1.8"/><circle cx="86.1" cy="4.9" r="0.9" fill="#444"/><circle cx="87.1" cy="7.1" r="0.7" fill="#444"/></svg>
<div style="left:261px;top:261px;width:33px;height:13px;background:linear-gradient(#f0f0f0,#d0d0d0);border-radius:7px 0 0 7px;border:1px solid #b8b8b8;box-sizing:border-box;"></div>
<div class="t" style="left:268px;top:263.8px;font-size:9px;color:#222;transform:scaleX(0.83);transform-origin:0 0;letter-spacing:0;">Snap</div>
<div style="left:294px;top:261px;width:54px;height:13px;background:linear-gradient(#f2f2f2,#d6d6d6);border-radius:0 2px 2px 0;border-bottom:1px solid #a8a8a8;box-sizing:border-box;"></div>
<div class="t" style="left:301px;top:263.8px;font-size:9px;color:#222;transform:scaleX(0.83);transform-origin:0 0;letter-spacing:0;">1/16</div>
<div style="left:336px;top:266px;width:0;height:0;border-left:3px solid transparent;border-right:3px solid transparent;border-top:4px solid #8a8a8a;"></div>
<div style="left:351px;top:261px;width:79px;height:13px;background:#f4f4f4;border:1px solid #c4c4c4;box-sizing:border-box;"></div>
<div class="t" style="left:369px;top:263.8px;font-size:9px;color:#222;transform:scaleX(0.83);transform-origin:0 0;letter-spacing:0;">7</div>
<div class="t" style="left:384px;top:263.8px;font-size:9px;color:#222;transform:scaleX(0.83);transform-origin:0 0;letter-spacing:0;">16/16</div>
<div class="t" style="left:413px;top:263.8px;font-size:9px;color:#222;transform:scaleX(0.83);transform-origin:0 0;letter-spacing:0;">70%</div>
<div style="left:440px;top:261px;width:118px;height:13px;background:#efefef;border:1px solid #c8c8c8;box-sizing:border-box;"></div>
<div style="left:499px;top:262px;width:1px;height:11px;background:#cfcfcf;"></div>
<div class="t" style="left:459.5px;top:263.8px;font-size:9px;color:#c0c0c0;transform:scaleX(0.83);transform-origin:0 0;letter-spacing:0;">1</div>
<div class="t" style="left:473px;top:263.8px;font-size:9px;color:#c0c0c0;transform:scaleX(0.83);transform-origin:0 0;letter-spacing:0;">1</div>
<div class="t" style="left:485.5px;top:263.8px;font-size:9px;color:#c0c0c0;transform:scaleX(0.83);transform-origin:0 0;letter-spacing:0;">0%</div>
<div class="t" style="left:518px;top:263.8px;font-size:9px;color:#c0c0c0;transform:scaleX(0.83);transform-origin:0 0;letter-spacing:0;">1</div>
<div class="t" style="left:532px;top:263.8px;font-size:9px;color:#c0c0c0;transform:scaleX(0.83);transform-origin:0 0;letter-spacing:0;">1</div>
<div class="t" style="left:544px;top:263.8px;font-size:9px;color:#c0c0c0;transform:scaleX(0.83);transform-origin:0 0;letter-spacing:0;">0%</div>
<div style="left:114px;top:261px;width:1px;height:13px;background:#cdcdcd;border-right:1px solid #f8f8f8;"></div>
<div style="left:156px;top:261px;width:1px;height:13px;background:#cdcdcd;border-right:1px solid #f8f8f8;"></div>
<div style="left:256px;top:261px;width:1px;height:13px;background:#cdcdcd;border-right:1px solid #f8f8f8;"></div>
<div style="left:435px;top:261px;width:1px;height:13px;background:#cdcdcd;border-right:1px solid #f8f8f8;"></div>
<div style="left:0px;top:277px;width:172px;height:37px;background:repeating-linear-gradient(0deg,rgba(255,255,255,0.12) 0 1px,transparent 1px 7px),repeating-linear-gradient(0deg,rgba(0,0,0,0.01) 0 3px,transparent 3px 13px),#e7e7e7;"></div>
<div style="left:172px;top:277px;width:709px;height:17px;background:#d8d8d8;border:1px solid #bdbdbd;box-sizing:border-box;"></div>
<div style="left:389px;top:278px;width:194px;height:15px;background:#f8f8f8;"></div>
<div style="left:382px;top:278px;width:7px;height:15px;background:#c4c4c4;"></div>
<div style="left:583px;top:278px;width:4px;height:15px;background:#c8c8c8;"></div>
<svg style="position:absolute;left:0;top:0" width="890" height="558"><path d="M173 289.6 L270 289.6 C300 289.2 340 289 384 289.2 L455 289.6 C462 288 466 286 475 284.8 C500 283 530 281.6 555 281.6 C570 282 577 283 583 284.2 L640 284.7 L678 284 L747 284.6 C760 285 770 285.5 778 286.5 L856 287.8 L881 288" stroke="#6a6a6a" stroke-width="1.1" fill="none"/></svg>
<div style="left:342px;top:277px;width:2px;height:17px;background:#222;"></div>
<div style="left:0px;top:294px;width:890px;height:3px;background:#e4e4e4;"></div>
<div style="left:172px;top:297px;width:709px;height:17px;background:#fafafa;"></div>
<div style="left:189px;top:297px;width:1px;height:17px;background:#d4d4d4;"></div>
<div style="left:230px;top:307px;width:1px;height:7px;background:#d4d4d4;"></div>
<div class="t" style="left:231px;top:307px;font-size:7px;color:#333;-webkit-text-stroke:0;">.2</div>
<div style="left:270px;top:307px;width:1px;height:7px;background:#d4d4d4;"></div>
<div class="t" style="left:271px;top:307px;font-size:7px;color:#333;-webkit-text-stroke:0;">.3</div>
<div style="left:310px;top:307px;width:1px;height:7px;background:#d4d4d4;"></div>
<div class="t" style="left:311px;top:307px;font-size:7px;color:#333;-webkit-text-stroke:0;">.4</div>
<div style="left:351px;top:297px;width:1px;height:17px;background:#d4d4d4;"></div>
<div style="left:392px;top:307px;width:1px;height:7px;background:#d4d4d4;"></div>
<div class="t" style="left:393px;top:307px;font-size:7px;color:#333;-webkit-text-stroke:0;">.2</div>
<div style="left:432px;top:307px;width:1px;height:7px;background:#d4d4d4;"></div>
<div class="t" style="left:433px;top:307px;font-size:7px;color:#333;-webkit-text-stroke:0;">.3</div>
<div style="left:472px;top:307px;width:1px;height:7px;background:#d4d4d4;"></div>
<div class="t" style="left:473px;top:307px;font-size:7px;color:#333;-webkit-text-stroke:0;">.4</div>
<div style="left:513px;top:297px;width:1px;height:17px;background:#d4d4d4;"></div>
<div style="left:554px;top:307px;width:1px;height:7px;background:#d4d4d4;"></div>
<div class="t" style="left:555px;top:307px;font-size:7px;color:#333;-webkit-text-stroke:0;">.2</div>
<div style="left:594px;top:307px;width:1px;height:7px;background:#d4d4d4;"></div>
<div class="t" style="left:595px;top:307px;font-size:7px;color:#333;-webkit-text-stroke:0;">.3</div>
<div style="left:634px;top:307px;width:1px;height:7px;background:#d4d4d4;"></div>
<div class="t" style="left:635px;top:307px;font-size:7px;color:#333;-webkit-text-stroke:0;">.4</div>
<div style="left:675px;top:297px;width:1px;height:17px;background:#d4d4d4;"></div>
<div style="left:716px;top:307px;width:1px;height:7px;background:#d4d4d4;"></div>
<div class="t" style="left:717px;top:307px;font-size:7px;color:#333;-webkit-text-stroke:0;">.2</div>
<div style="left:756px;top:307px;width:1px;height:7px;background:#d4d4d4;"></div>
<div class="t" style="left:757px;top:307px;font-size:7px;color:#333;-webkit-text-stroke:0;">.3</div>
<div style="left:796px;top:307px;width:1px;height:7px;background:#d4d4d4;"></div>
<div class="t" style="left:797px;top:307px;font-size:7px;color:#333;-webkit-text-stroke:0;">.4</div>
<div style="left:837px;top:297px;width:1px;height:17px;background:#d4d4d4;"></div>
<div style="left:878px;top:307px;width:1px;height:7px;background:#d4d4d4;"></div>
<div class="t" style="left:190px;top:299px;font-size:7px;color:#333;-webkit-text-stroke:0;">0:10.00</div>
<div class="t" style="left:190px;top:305px;font-size:9px;color:#111;">6</div>
<div class="t" style="left:352px;top:299px;font-size:7px;color:#333;-webkit-text-stroke:0;">0:12.00</div>
<div class="t" style="left:352px;top:305px;font-size:9px;color:#111;">7</div>
<div class="t" style="left:514px;top:299px;font-size:7px;color:#333;-webkit-text-stroke:0;">0:14.00</div>
<div class="t" style="left:514px;top:305px;font-size:9px;color:#111;">8</div>
<div class="t" style="left:676px;top:299px;font-size:7px;color:#333;-webkit-text-stroke:0;">0:16.00</div>
<div class="t" style="left:676px;top:305px;font-size:9px;color:#111;">9</div>
<div class="t" style="left:838px;top:299px;font-size:7px;color:#333;-webkit-text-stroke:0;">0:18.00</div>
<div class="t" style="left:838px;top:305px;font-size:9px;color:#111;">10</div>
<div style="left:0px;top:313px;width:881px;height:2px;background:#5a5a5a;"></div>
<div style="left:0px;top:315px;width:172px;height:198px;background:repeating-linear-gradient(0deg,rgba(255,255,255,0.12) 0 1px,transparent 1px 7px),repeating-linear-gradient(0deg,rgba(0,0,0,0.01) 0 3px,transparent 3px 13px),#e7e7e7;"></div>
<div style="left:172px;top:315px;width:709px;height:198px;background:#f6f6f6;"></div>
<svg style="position:absolute;left:0;top:0" width="890" height="558"><defs><clipPath id="ca"><path d="M172,465.3 C186.9,465.3 243.3,465.2 261.5,465.2 C279.7,465.2 272.8,465.6 281.0,465.2 C289.2,464.8 303.3,463.2 310.7,462.5 C318.1,461.8 319.9,461.6 325.5,461.2 C331.1,460.8 338.9,460.4 344.4,460.1 C349.9,459.8 352.9,459.6 358.5,459.5 C364.1,459.4 370.6,460.0 378.0,459.4 C385.4,458.8 393.8,458.0 402.6,455.7 C411.4,453.4 422.8,449.0 430.9,445.6 C439.0,442.2 444.4,439.5 451.1,435.5 C457.9,431.5 464.6,425.6 471.4,421.4 C478.1,417.2 486.6,412.6 491.6,410.4 C496.7,408.2 498.6,408.7 501.7,408.2 C504.8,407.7 505.2,407.5 509.9,407.2 C514.6,406.9 523.2,406.7 529.7,406.4 C536.2,406.1 543.4,406.3 548.7,405.2 C554.1,404.1 557.0,401.9 561.8,399.5 C566.6,397.1 572.0,393.4 577.4,390.8 C582.8,388.2 588.4,386.1 594.0,384.2 C599.6,382.3 603.7,380.9 611.2,379.7 C618.7,378.5 627.9,378.2 638.9,376.8 C649.9,375.4 668.4,372.9 677.0,371.1 C685.6,369.3 686.2,367.2 690.4,366.1 C694.6,365.0 697.3,364.7 702.2,364.4 C707.1,364.1 713.7,364.2 720.0,364.3 C726.3,364.4 729.0,363.1 740.0,364.8 C751.0,366.5 770.0,370.4 786.0,374.4 C802.0,378.4 820.2,384.4 836.0,389.0 C851.8,393.6 873.5,399.8 881.0,402.0 L881,513 L172,513 Z"/></clipPath><linearGradient id="yg" x1="0" x2="1" y1="0" y2="0"><stop offset="0" stop-color="#f0e77d"/><stop offset="0.3" stop-color="#f2e282"/><stop offset="0.62" stop-color="#f2dc88"/><stop offset="1" stop-color="#f4ee8c"/></linearGradient><linearGradient id="og" x1="0" x2="1" y1="0" y2="0"><stop offset="0" stop-color="#a9ab8b"/><stop offset="1" stop-color="#b3b08c"/></linearGradient></defs><rect x="189" y="313.6" width="1" height="198.79999999999995" fill="#c4c4c4"/><rect x="209" y="313.6" width="1" height="198.79999999999995" fill="#e9e9e9"/><rect x="230" y="313.6" width="1" height="198.79999999999995" fill="#d8d8d8"/><rect x="250" y="313.6" width="1" height="198.79999999999995" fill="#e9e9e9"/><rect x="270" y="313.6" width="1" height="198.79999999999995" fill="#d8d8d8"/><rect x="290" y="313.6" width="1" height="198.79999999999995" fill="#e9e9e9"/><rect x="310" y="313.6" width="1" height="198.79999999999995" fill="#d8d8d8"/><rect x="331" y="313.6" width="1" height="198.79999999999995" fill="#e9e9e9"/><rect x="351" y="313.6" width="1" height="198.79999999999995" fill="#c4c4c4"/><rect x="371" y="313.6" width="1" height="198.79999999999995" fill="#e9e9e9"/><rect x="392" y="313.6" width="1" height="198.79999999999995" fill="#d8d8d8"/><rect x="412" y="313.6" width="1" height="198.79999999999995" fill="#e9e9e9"/><rect x="432" y="313.6" width="1" height="198.79999999999995" fill="#d8d8d8"/><rect x="452" y="313.6" width="1" height="198.79999999999995" fill="#e9e9e9"/><rect x="472" y="313.6" width="1" height="198.79999999999995" fill="#d8d8d8"/><rect x="493" y="313.6" width="1" height="198.79999999999995" fill="#e9e9e9"/><rect x="513" y="313.6" width="1" height="198.79999999999995" fill="#c4c4c4"/><rect x="533" y="313.6" width="1" height="198.79999999999995" fill="#e9e9e9"/><rect x="554" y="313.6" width="1" height="198.79999999999995" fill="#d8d8d8"/><rect x="574" y="313.6" width="1" height="198.79999999999995" fill="#e9e9e9"/><rect x="594" y="313.6" width="1" height="198.79999999999995" fill="#d8d8d8"/><rect x="614" y="313.6" width="1" height="198.79999999999995" fill="#e9e9e9"/><rect x="634" y="313.6" width="1" height="198.79999999999995" fill="#d8d8d8"/><rect x="655" y="313.6" width="1" height="198.79999999999995" fill="#e9e9e9"/><rect x="675" y="313.6" width="1" height="198.79999999999995" fill="#c4c4c4"/><rect x="695" y="313.6" width="1" height="198.79999999999995" fill="#e9e9e9"/><rect x="716" y="313.6" width="1" height="198.79999999999995" fill="#d8d8d8"/><rect x="736" y="313.6" width="1" height="198.79999999999995" fill="#e9e9e9"/><rect x="756" y="313.6" width="1" height="198.79999999999995" fill="#d8d8d8"/><rect x="776" y="313.6" width="1" height="198.79999999999995" fill="#e9e9e9"/><rect x="796" y="313.6" width="1" height="198.79999999999995" fill="#d8d8d8"/><rect x="817" y="313.6" width="1" height="198.79999999999995" fill="#e9e9e9"/><rect x="837" y="313.6" width="1" height="198.79999999999995" fill="#c4c4c4"/><rect x="857" y="313.6" width="1" height="198.79999999999995" fill="#e9e9e9"/><rect x="878" y="313.6" width="1" height="198.79999999999995" fill="#d8d8d8"/><rect x="172" y="338" width="709" height="1" fill="#dedede"/><rect x="172" y="363" width="709" height="1" fill="#dedede"/><rect x="172" y="388" width="709" height="1" fill="#dedede"/><rect x="172" y="413" width="709" height="1" fill="#dedede"/><rect x="172" y="438" width="709" height="1" fill="#dedede"/><rect x="172" y="463" width="709" height="1" fill="#dedede"/><rect x="172" y="488" width="709" height="1" fill="#dedede"/><rect x="179" y="390" width="9" height="1.5" fill="#b8b8b8"/><rect x="172" y="391" width="7" height="1.5" fill="#b8b8b8"/><rect x="230" y="390" width="40" height="1.5" fill="#b8b8b8"/><rect x="311" y="385" width="39" height="1.5" fill="#b8b8b8"/><rect x="189" y="399" width="161" height="1.5" fill="#b8b8b8"/><rect x="189" y="406" width="161" height="1.5" fill="#b8b8b8"/><rect x="189" y="415" width="161" height="1.5" fill="#b8b8b8"/><rect x="172" y="413" width="16" height="1.5" fill="#b8b8b8"/><rect x="172" y="419" width="16" height="1.5" fill="#b8b8b8"/><rect x="392" y="376" width="40" height="1.5" fill="#b8b8b8"/><rect x="432" y="381" width="41" height="1.5" fill="#b8b8b8"/><rect x="473" y="390" width="37" height="1.5" fill="#b8b8b8"/><rect x="350" y="404" width="143" height="1.5" fill="#b8b8b8"/><rect x="350" y="409" width="120" height="1.5" fill="#b8b8b8"/><rect x="350" y="423" width="140" height="1.5" fill="#b8b8b8"/><rect x="532" y="399" width="21" height="1.5" fill="#b8b8b8"/><rect x="553" y="406" width="21" height="1.5" fill="#b8b8b8"/><rect x="553" y="415" width="40" height="1.5" fill="#b8b8b8"/><rect x="582" y="399" width="11" height="1.5" fill="#b8b8b8"/><rect x="595" y="389" width="37" height="1.5" fill="#b8b8b8"/><rect x="595" y="395" width="37" height="1.5" fill="#b8b8b8"/><rect x="595" y="419" width="37" height="1.5" fill="#b8b8b8"/><rect x="634" y="390" width="40" height="1.5" fill="#b8b8b8"/><rect x="634" y="406" width="40" height="1.5" fill="#b8b8b8"/><rect x="634" y="422" width="40" height="1.5" fill="#b8b8b8"/><rect x="676" y="404" width="37" height="1.5" fill="#b8b8b8"/><rect x="676" y="413" width="160" height="1.5" fill="#b8b8b8"/><rect x="676" y="419" width="160" height="1.5" fill="#b8b8b8"/><rect x="713" y="406" width="81" height="1.5" fill="#b8b8b8"/><rect x="796" y="395" width="17" height="1.5" fill="#b8b8b8"/><rect x="817" y="391" width="11" height="1.5" fill="#b8b8b8"/><rect x="838" y="399" width="43" height="1.5" fill="#b8b8b8"/><rect x="838" y="406" width="43" height="1.5" fill="#b8b8b8"/><rect x="838" y="415" width="43" height="1.5" fill="#b8b8b8"/><g clip-path="url(#ca)"><rect x="172" y="300" width="186.5" height="213" fill="#c6e983"/><rect x="358.5" y="300" width="219" height="212" fill="url(#og)"/><rect x="577.4" y="300" width="304" height="212" fill="url(#yg)"/><rect x="189" y="313.6" width="1" height="198.79999999999995" fill="#000" fill-opacity="0.14"/><rect x="209" y="313.6" width="1" height="198.79999999999995" fill="#000" fill-opacity="0.03"/><rect x="230" y="313.6" width="1" height="198.79999999999995" fill="#000" fill-opacity="0.06"/><rect x="250" y="313.6" width="1" height="198.79999999999995" fill="#000" fill-opacity="0.03"/><rect x="270" y="313.6" width="1" height="198.79999999999995" fill="#000" fill-opacity="0.06"/><rect x="290" y="313.6" width="1" height="198.79999999999995" fill="#000" fill-opacity="0.03"/><rect x="310" y="313.6" width="1" height="198.79999999999995" fill="#000" fill-opacity="0.06"/><rect x="331" y="313.6" width="1" height="198.79999999999995" fill="#000" fill-opacity="0.03"/><rect x="351" y="313.6" width="1" height="198.79999999999995" fill="#000" fill-opacity="0.14"/><rect x="371" y="313.6" width="1" height="198.79999999999995" fill="#000" fill-opacity="0.03"/><rect x="392" y="313.6" width="1" height="198.79999999999995" fill="#000" fill-opacity="0.06"/><rect x="412" y="313.6" width="1" height="198.79999999999995" fill="#000" fill-opacity="0.03"/><rect x="432" y="313.6" width="1" height="198.79999999999995" fill="#000" fill-opacity="0.06"/><rect x="452" y="313.6" width="1" height="198.79999999999995" fill="#000" fill-opacity="0.03"/><rect x="472" y="313.6" width="1" height="198.79999999999995" fill="#000" fill-opacity="0.06"/><rect x="493" y="313.6" width="1" height="198.79999999999995" fill="#000" fill-opacity="0.03"/><rect x="513" y="313.6" width="1" height="198.79999999999995" fill="#000" fill-opacity="0.14"/><rect x="533" y="313.6" width="1" height="198.79999999999995" fill="#000" fill-opacity="0.03"/><rect x="554" y="313.6" width="1" height="198.79999999999995" fill="#000" fill-opacity="0.06"/><rect x="574" y="313.6" width="1" height="198.79999999999995" fill="#000" fill-opacity="0.03"/><rect x="594" y="313.6" width="1" height="198.79999999999995" fill="#000" fill-opacity="0.06"/><rect x="614" y="313.6" width="1" height="198.79999999999995" fill="#000" fill-opacity="0.03"/><rect x="634" y="313.6" width="1" height="198.79999999999995" fill="#000" fill-opacity="0.06"/><rect x="655" y="313.6" width="1" height="198.79999999999995" fill="#000" fill-opacity="0.03"/><rect x="675" y="313.6" width="1" height="198.79999999999995" fill="#000" fill-opacity="0.14"/><rect x="695" y="313.6" width="1" height="198.79999999999995" fill="#000" fill-opacity="0.03"/><rect x="716" y="313.6" width="1" height="198.79999999999995" fill="#000" fill-opacity="0.06"/><rect x="736" y="313.6" width="1" height="198.79999999999995" fill="#000" fill-opacity="0.03"/><rect x="756" y="313.6" width="1" height="198.79999999999995" fill="#000" fill-opacity="0.06"/><rect x="776" y="313.6" width="1" height="198.79999999999995" fill="#000" fill-opacity="0.03"/><rect x="796" y="313.6" width="1" height="198.79999999999995" fill="#000" fill-opacity="0.06"/><rect x="817" y="313.6" width="1" height="198.79999999999995" fill="#000" fill-opacity="0.03"/><rect x="837" y="313.6" width="1" height="198.79999999999995" fill="#000" fill-opacity="0.14"/><rect x="857" y="313.6" width="1" height="198.79999999999995" fill="#000" fill-opacity="0.03"/><rect x="878" y="313.6" width="1" height="198.79999999999995" fill="#000" fill-opacity="0.06"/><rect x="172" y="338" width="709" height="1" fill="#000" fill-opacity="0.05"/><rect x="172" y="363" width="709" height="1" fill="#000" fill-opacity="0.05"/><rect x="172" y="388" width="709" height="1" fill="#000" fill-opacity="0.05"/><rect x="172" y="413" width="709" height="1" fill="#000" fill-opacity="0.05"/><rect x="172" y="438" width="709" height="1" fill="#000" fill-opacity="0.05"/><rect x="172" y="463" width="709" height="1" fill="#000" fill-opacity="0.05"/><rect x="172" y="488" width="709" height="1" fill="#000" fill-opacity="0.05"/><rect x="179" y="390" width="9" height="1.5" fill="#000" fill-opacity="0.15"/><rect x="172" y="391" width="7" height="1.5" fill="#000" fill-opacity="0.15"/><rect x="230" y="390" width="40" height="1.5" fill="#000" fill-opacity="0.15"/><rect x="311" y="385" width="39" height="1.5" fill="#000" fill-opacity="0.15"/><rect x="189" y="399" width="161" height="1.5" fill="#000" fill-opacity="0.15"/><rect x="189" y="406" width="161" height="1.5" fill="#000" fill-opacity="0.15"/><rect x="189" y="415" width="161" height="1.5" fill="#000" fill-opacity="0.15"/><rect x="172" y="413" width="16" height="1.5" fill="#000" fill-opacity="0.15"/><rect x="172" y="419" width="16" height="1.5" fill="#000" fill-opacity="0.15"/><rect x="392" y="376" width="40" height="1.5" fill="#000" fill-opacity="0.15"/><rect x="432" y="381" width="41" height="1.5" fill="#000" fill-opacity="0.15"/><rect x="473" y="390" width="37" height="1.5" fill="#000" fill-opacity="0.15"/><rect x="350" y="404" width="143" height="1.5" fill="#000" fill-opacity="0.15"/><rect x="350" y="409" width="120" height="1.5" fill="#000" fill-opacity="0.15"/><rect x="350" y="423" width="140" height="1.5" fill="#000" fill-opacity="0.15"/><rect x="532" y="399" width="21" height="1.5" fill="#000" fill-opacity="0.15"/><rect x="553" y="406" width="21" height="1.5" fill="#000" fill-opacity="0.15"/><rect x="553" y="415" width="40" height="1.5" fill="#000" fill-opacity="0.15"/><rect x="582" y="399" width="11" height="1.5" fill="#000" fill-opacity="0.15"/><rect x="595" y="389" width="37" height="1.5" fill="#000" fill-opacity="0.15"/><rect x="595" y="395" width="37" height="1.5" fill="#000" fill-opacity="0.15"/><rect x="595" y="419" width="37" height="1.5" fill="#000" fill-opacity="0.15"/><rect x="634" y="390" width="40" height="1.5" fill="#000" fill-opacity="0.15"/><rect x="634" y="406" width="40" height="1.5" fill="#000" fill-opacity="0.15"/><rect x="634" y="422" width="40" height="1.5" fill="#000" fill-opacity="0.15"/><rect x="676" y="404" width="37" height="1.5" fill="#000" fill-opacity="0.15"/><rect x="676" y="413" width="160" height="1.5" fill="#000" fill-opacity="0.15"/><rect x="676" y="419" width="160" height="1.5" fill="#000" fill-opacity="0.15"/><rect x="713" y="406" width="81" height="1.5" fill="#000" fill-opacity="0.15"/><rect x="796" y="395" width="17" height="1.5" fill="#000" fill-opacity="0.15"/><rect x="817" y="391" width="11" height="1.5" fill="#000" fill-opacity="0.15"/><rect x="838" y="399" width="43" height="1.5" fill="#000" fill-opacity="0.15"/><rect x="838" y="406" width="43" height="1.5" fill="#000" fill-opacity="0.15"/><rect x="838" y="415" width="43" height="1.5" fill="#000" fill-opacity="0.15"/></g><path d="M172,465.3 C186.9,465.3 243.3,465.2 261.5,465.2 C279.7,465.2 272.8,465.6 281.0,465.2 C289.2,464.8 303.3,463.2 310.7,462.5 C318.1,461.8 319.9,461.6 325.5,461.2 C331.1,460.8 338.9,460.4 344.4,460.1 C349.9,459.8 352.9,459.6 358.5,459.5 C364.1,459.4 370.6,460.0 378.0,459.4 C385.4,458.8 393.8,458.0 402.6,455.7 C411.4,453.4 422.8,449.0 430.9,445.6 C439.0,442.2 444.4,439.5 451.1,435.5 C457.9,431.5 464.6,425.6 471.4,421.4 C478.1,417.2 486.6,412.6 491.6,410.4 C496.7,408.2 498.6,408.7 501.7,408.2 C504.8,407.7 505.2,407.5 509.9,407.2 C514.6,406.9 523.2,406.7 529.7,406.4 C536.2,406.1 543.4,406.3 548.7,405.2 C554.1,404.1 557.0,401.9 561.8,399.5 C566.6,397.1 572.0,393.4 577.4,390.8 C582.8,388.2 588.4,386.1 594.0,384.2 C599.6,382.3 603.7,380.9 611.2,379.7 C618.7,378.5 627.9,378.2 638.9,376.8 C649.9,375.4 668.4,372.9 677.0,371.1 C685.6,369.3 686.2,367.2 690.4,366.1 C694.6,365.0 697.3,364.7 702.2,364.4 C707.1,364.1 713.7,364.2 720.0,364.3 C726.3,364.4 729.0,363.1 740.0,364.8 C751.0,366.5 770.0,370.4 786.0,374.4 C802.0,378.4 820.2,384.4 836.0,389.0 C851.8,393.6 873.5,399.8 881.0,402.0" stroke="#383838" stroke-width="1.05" fill="none"/><path d="M461.2,410.2 L509.9,407.2" stroke="#222" stroke-width="1.5"/><circle cx="261.5" cy="465.2" r="2.4" fill="#4a4a4a" stroke="#222" stroke-width="0.8"/><circle cx="358.5" cy="459.5" r="2.4" fill="#4a4a4a" stroke="#222" stroke-width="0.8"/><circle cx="461.2" cy="410.2" r="2.4" fill="#4a4a4a" stroke="#222" stroke-width="0.8"/><circle cx="509.9" cy="407.2" r="3.3" fill="#4a4a4a" stroke="#222" stroke-width="0.8"/><circle cx="548.7" cy="405.2" r="2.4" fill="#4a4a4a" stroke="#222" stroke-width="0.8"/><circle cx="577.4" cy="390.8" r="2.4" fill="#4a4a4a" stroke="#222" stroke-width="0.8"/><circle cx="638.9" cy="376.8" r="2.4" fill="#4a4a4a" stroke="#222" stroke-width="0.8"/><circle cx="677" cy="371.1" r="2.4" fill="#4a4a4a" stroke="#222" stroke-width="0.8"/><circle cx="702.2" cy="364.4" r="2.4" fill="#4a4a4a" stroke="#222" stroke-width="0.8"/></svg>
<div class="t" style="left:501px;top:393px;font-size:9px;color:#222;transform:scaleX(0.83);transform-origin:0 0;letter-spacing:0;">0.530</div>
<div class="t" style="left:129px;top:315.6px;width:39px;text-align:right;font-size:7px;color:#222">1.00</div>
<div class="t" style="left:129px;top:360.3px;width:39px;text-align:right;font-size:7px;color:#222">0.75</div>
<div class="t" style="left:129px;top:409.7px;width:39px;text-align:right;font-size:7px;color:#222">0.50</div>
<div class="t" style="left:129px;top:459.5px;width:39px;text-align:right;font-size:7px;color:#222">0.25</div>
<div class="t" style="left:129px;top:505.6px;width:39px;text-align:right;font-size:7px;color:#222">0.00</div>
<div style="left:169px;top:314px;width:3px;height:1px;background:#bbb;"></div>
<div style="left:169px;top:338px;width:3px;height:1px;background:#bbb;"></div>
<div style="left:169px;top:363px;width:3px;height:1px;background:#bbb;"></div>
<div style="left:169px;top:388px;width:3px;height:1px;background:#bbb;"></div>
<div style="left:169px;top:413px;width:3px;height:1px;background:#bbb;"></div>
<div style="left:169px;top:438px;width:3px;height:1px;background:#bbb;"></div>
<div style="left:169px;top:463px;width:3px;height:1px;background:#bbb;"></div>
<div style="left:169px;top:488px;width:3px;height:1px;background:#bbb;"></div>
<div style="left:169px;top:512px;width:3px;height:1px;background:#bbb;"></div>
<div style="left:172px;top:314px;width:1px;height:199px;background:#a8a8a8;"></div>
<div style="left:0px;top:316px;width:14px;height:47px;background:linear-gradient(90deg,#e8e8e8,#cfcfcf);border-radius:7px;border:1px solid #b8b8b8;box-sizing:border-box;"></div>
<div style="left:1px;top:333px;width:12px;height:14px;background:#2e2e2e;"></div>
<svg style="position:absolute;left:0;top:316px" width="14" height="47"><path d="M4 6 L9 6 L9 12" stroke="#555" stroke-width="1.3" fill="none"/><path d="M4 22 L10 28" stroke="#ccc" stroke-width="1.3"/><path d="M4 39 Q8 39 9.5 44" stroke="#555" stroke-width="1.3" fill="none"/></svg>
<div style="left:0px;top:513px;width:890px;height:45px;background:repeating-linear-gradient(0deg,rgba(255,255,255,0.12) 0 1px,transparent 1px 7px),repeating-linear-gradient(0deg,rgba(0,0,0,0.01) 0 3px,transparent 3px 13px),#e7e7e7;"></div>
<div style="left:364px;top:516px;width:160px;height:14px;background:linear-gradient(#f0f0f0,#d2d2d2);border-radius:7px;border:1px solid #b0b0b0;box-sizing:border-box;"></div>
<div style="left:402px;top:516px;width:32px;height:14px;background:linear-gradient(#3a3a3a,#222);"></div>
<div style="left:434px;top:517px;width:1px;height:12px;background:#bcbcbc;"></div>
<div style="left:465px;top:517px;width:1px;height:12px;background:#bcbcbc;"></div>
<div class="t" style="left:373px;top:519.3px;font-size:9px;color:#222;transform:scaleX(0.83);transform-origin:0 0;letter-spacing:0;">Tracks</div>
<div class="t" style="left:408px;top:519.3px;font-size:9px;color:#eee;transform:scaleX(0.83);transform-origin:0 0;letter-spacing:0;">Editor</div>
<div class="t" style="left:441px;top:519.3px;font-size:9px;color:#222;transform:scaleX(0.83);transform-origin:0 0;letter-spacing:0;">Mixer</div>
<div class="t" style="left:472px;top:519.3px;font-size:9px;color:#222;transform:scaleX(0.83);transform-origin:0 0;letter-spacing:0;">Big Transport</div>
<svg style="position:absolute;left:139px;top:535px" width="23" height="23"><circle cx="11" cy="11" r="10.3" fill="#5bd346" stroke="#3aa82a" stroke-width="0.8"/><path d="M7.5 7.5 A5 5 0 1 0 14.5 7.5" stroke="#143a10" stroke-width="1.8" fill="none"/><path d="M11 4.5 v6" stroke="#143a10" stroke-width="1.8"/></svg>
<div style="left:165px;top:537px;width:1px;height:18px;background:#d0d0d0;"></div>
<div style="left:170px;top:536px;width:87px;height:20px;background:linear-gradient(#eeeeee,#cfcfcf);border-radius:10px 0 0 10px;border:1px solid #b8b8b8;box-sizing:border-box;"></div>
<div style="left:204px;top:537px;width:1px;height:18px;background:#bcbcbc;"></div>
<div style="left:235px;top:537px;width:1px;height:18px;background:#bcbcbc;"></div>
<div style="left:182px;top:541px;width:11px;height:11px;background:#5e5e5e;"></div>
<svg style="position:absolute;left:170px;top:536px" width="87" height="20"><path d="M43 4 L56 10 L43 16 Z" fill="#5e5e5e"/><path d="M75 6 A5 5 0 1 1 70 11" stroke="#666" stroke-width="1.5" fill="none"/><path d="M68 8 L71 12 L73 8 Z" fill="#666"/></svg>
<div style="left:257px;top:537px;width:58px;height:19px;background:#f0f0f0;border:1px solid #cfcfcf;box-sizing:border-box;"></div>
<div class="t" style="left:277px;top:539px;font-size:9px;color:#c4c4c4;transform:scaleX(0.83);transform-origin:0 0;letter-spacing:0;">9</div>
<div class="t" style="left:289px;top:539px;font-size:9px;color:#c4c4c4;transform:scaleX(0.83);transform-origin:0 0;letter-spacing:0;">1</div>
<div class="t" style="left:302px;top:539px;font-size:9px;color:#c4c4c4;transform:scaleX(0.83);transform-origin:0 0;letter-spacing:0;">0%</div>
<div class="t" style="left:272px;top:547px;font-size:9px;color:#c4c4c4;transform:scaleX(0.83);transform-origin:0 0;letter-spacing:0;">10</div>
<div class="t" style="left:289px;top:547px;font-size:9px;color:#c4c4c4;transform:scaleX(0.83);transform-origin:0 0;letter-spacing:0;">1</div>
<div class="t" style="left:302px;top:547px;font-size:9px;color:#c4c4c4;transform:scaleX(0.83);transform-origin:0 0;letter-spacing:0;">0%</div>
<div style="left:318px;top:536px;width:95px;height:20px;background:linear-gradient(#eeeeee,#cfcfcf);border-radius:10px 0 0 10px;border:1px solid #b8b8b8;box-sizing:border-box;"></div>
<div style="left:353px;top:537px;width:1px;height:18px;background:#bcbcbc;"></div>
<div style="left:373px;top:537px;width:1px;height:18px;background:#bcbcbc;"></div>
<div style="left:393px;top:537px;width:1px;height:18px;background:#bcbcbc;"></div>
<svg style="position:absolute;left:318px;top:536px" width="95" height="20"><circle cx="18" cy="10" r="6.5" fill="#5e5e5e"/><path d="M42.5 4 L46.5 4 L49.5 16 L39.5 16 Z" fill="#6a6a6a"/><path d="M41 12 L48.5 3" stroke="#555" stroke-width="1.2"/><path d="M41.5 10 L47.5 10" stroke="#ddd" stroke-width="0.8"/><path d="M62 5 L67 5 L67 9 L64.5 12 L62 9 Z" fill="#666"/><circle cx="64.5" cy="15" r="1.6" fill="#555"/><path d="M82 8 L84.5 4 L87 8 L87 11 L82 11 Z" fill="#666"/><circle cx="84.5" cy="15" r="1.6" fill="#555"/></svg>
<div style="left:414px;top:537px;width:58px;height:19px;background:#f0f0f0;border:1px solid #cfcfcf;box-sizing:border-box;"></div>
<div class="t" style="left:430px;top:539px;font-size:9px;color:#c8c8c8;transform:scaleX(0.83);transform-origin:0 0;letter-spacing:0;">10</div>
<div class="t" style="left:447px;top:539px;font-size:9px;color:#c8c8c8;transform:scaleX(0.83);transform-origin:0 0;letter-spacing:0;">1</div>
<div class="t" style="left:459px;top:539px;font-size:9px;color:#c8c8c8;transform:scaleX(0.83);transform-origin:0 0;letter-spacing:0;">0%</div>
<div class="t" style="left:430px;top:547px;font-size:9px;color:#c8c8c8;transform:scaleX(0.83);transform-origin:0 0;letter-spacing:0;">12</div>
<div class="t" style="left:447px;top:547px;font-size:9px;color:#c8c8c8;transform:scaleX(0.83);transform-origin:0 0;letter-spacing:0;">1</div>
<div class="t" style="left:459px;top:547px;font-size:9px;color:#c8c8c8;transform:scaleX(0.83);transform-origin:0 0;letter-spacing:0;">0%</div>
<div style="left:476px;top:537px;width:176px;height:19px;background:#f2f2f2;border:1px solid #cfcfcf;box-sizing:border-box;"></div>
<div class="t" style="left:528.4px;top:538px;font-size:17px;color:#111;transform:scaleX(0.86);transform-origin:0 0;letter-spacing:0;-webkit-text-stroke:0.45px #111;">7.71</div>
<div class="t" style="left:597.5px;top:538px;font-size:17px;color:#111;transform:scaleX(0.86);transform-origin:0 0;letter-spacing:0;-webkit-text-stroke:0.45px #111;">4</div>
<div class="t" style="left:621px;top:538px;font-size:17px;color:#111;transform:scaleX(0.86);transform-origin:0 0;letter-spacing:0;-webkit-text-stroke:0.45px #111;">4</div>
<div style="left:636px;top:540px;width:14px;height:13px;background:linear-gradient(90deg,#eee 0,#ccc 40%,#888 45%,#777 100%);border:1px solid #999;box-sizing:border-box;"></div>
<div style="left:654px;top:537px;width:34px;height:19px;background:#f2f2f2;border:1px solid #cfcfcf;box-sizing:border-box;"></div>
<div class="t" style="left:665px;top:539px;font-size:9px;color:#222;transform:scaleX(0.83);transform-origin:0 0;letter-spacing:0;">4/4</div>
<div class="t" style="left:659px;top:547px;font-size:9px;color:#222;transform:scaleX(0.83);transform-origin:0 0;letter-spacing:0;">120.00</div>
<div style="left:693px;top:537px;width:1px;height:18px;background:#d0d0d0;"></div>
<div style="left:698px;top:537px;width:34px;height:19px;background:#f0f0f0;border:1px solid #cfcfcf;box-sizing:border-box;"></div>
<div class="t" style="left:701px;top:539px;font-size:9px;color:#c0c0c0;transform:scaleX(0.83);transform-origin:0 0;letter-spacing:0;">Mix</div>
<div class="t" style="left:701px;top:547px;font-size:9px;color:#c0c0c0;transform:scaleX(0.83);transform-origin:0 0;letter-spacing:0;">File</div>
<div class="t" style="left:725px;top:539px;font-size:9px;color:#222;transform:scaleX(0.83);transform-origin:0 0;letter-spacing:0;">2</div>
<div class="t" style="left:725px;top:547px;font-size:9px;color:#222;transform:scaleX(0.83);transform-origin:0 0;letter-spacing:0;">0</div>
<div style="left:733px;top:537px;width:16px;height:19px;background:linear-gradient(#eeeeee,#d0d0d0);border:1px solid #bcbcbc;box-sizing:border-box;"></div>
<svg style="position:absolute;left:733px;top:537px" width="16" height="19"><path d="M3.5 15.5 L5 12 L10 6 Q12 4.5 13 6 Q13.5 7.5 12 9 L7 14 Z" fill="#111"/><path d="M9 9 L10.5 10.5" stroke="#eee" stroke-width="0.8"/></svg>
</body></html>
